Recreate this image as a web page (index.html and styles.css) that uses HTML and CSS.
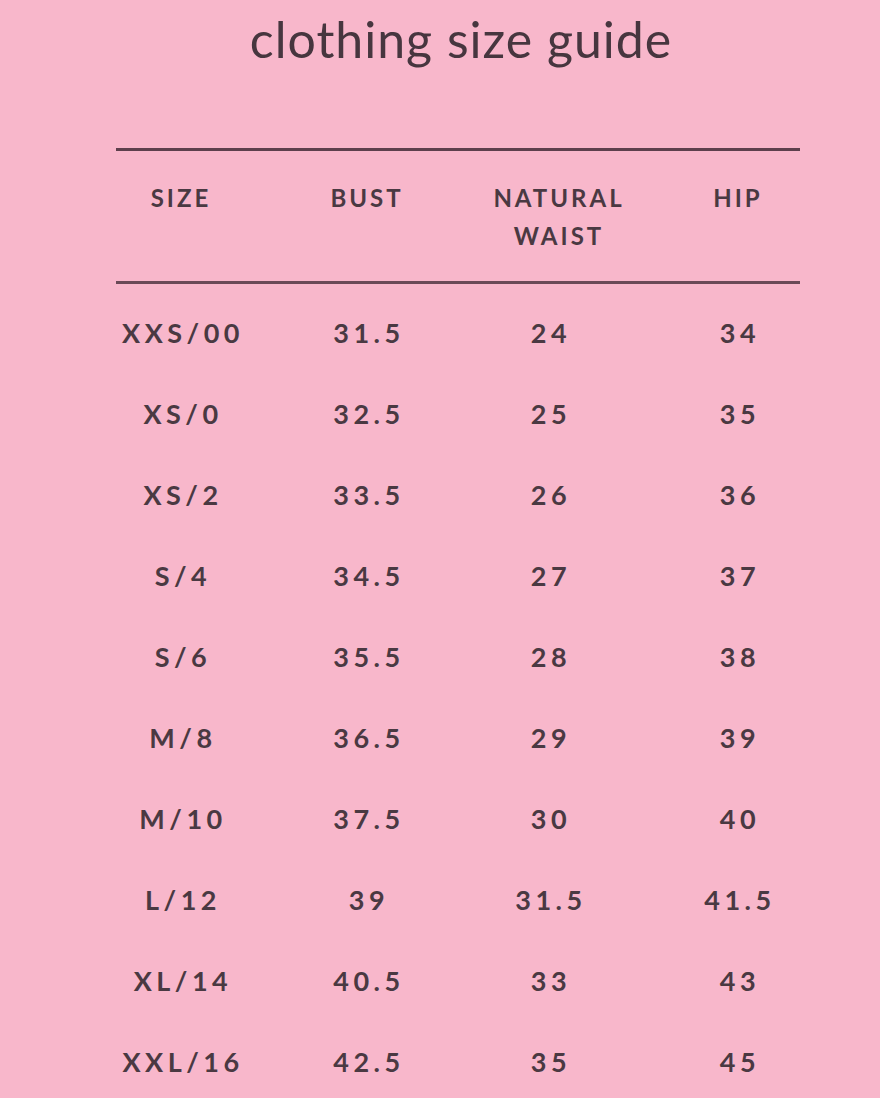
FILE: index.html
```html
<!DOCTYPE html>
<html lang="en">
<head>
<meta charset="utf-8">
<title>clothing size guide</title>
<link rel="stylesheet" href="styles.css">
</head>
<body>
<h1 class="title">clothing size guide</h1>
<div class="table">
  <div class="head">
    <div class="cell">SIZE</div>
    <div class="cell">BUST</div>
    <div class="cell waist-head">NATURAL<br>WAIST</div>
    <div class="cell">HIP</div>
  </div>
  <div class="body">
    <div class="row"><div class="cell">XXS/00</div><div class="cell">31.5</div><div class="cell">24</div><div class="cell">34</div></div>
    <div class="row"><div class="cell">XS/0</div><div class="cell">32.5</div><div class="cell">25</div><div class="cell">35</div></div>
    <div class="row"><div class="cell">XS/2</div><div class="cell">33.5</div><div class="cell">26</div><div class="cell">36</div></div>
    <div class="row"><div class="cell">S/4</div><div class="cell">34.5</div><div class="cell">27</div><div class="cell">37</div></div>
    <div class="row"><div class="cell">S/6</div><div class="cell">35.5</div><div class="cell">28</div><div class="cell">38</div></div>
    <div class="row"><div class="cell">M/8</div><div class="cell">36.5</div><div class="cell">29</div><div class="cell">39</div></div>
    <div class="row"><div class="cell">M/10</div><div class="cell">37.5</div><div class="cell">30</div><div class="cell">40</div></div>
    <div class="row"><div class="cell">L/12</div><div class="cell">39</div><div class="cell">31.5</div><div class="cell">41.5</div></div>
    <div class="row"><div class="cell">XL/14</div><div class="cell">40.5</div><div class="cell">33</div><div class="cell">43</div></div>
    <div class="row"><div class="cell">XXL/16</div><div class="cell">42.5</div><div class="cell">35</div><div class="cell">45</div></div>
  </div>
</div>
</body>
</html>
```

FILE: styles.css
```css
html, body {
  margin: 0;
  padding: 0;
  background: #f8b7cb;
}
body {
  width: 880px;
  height: 1098px;
  overflow: hidden;
  color: #4a3942;
  font-family: "Lato", "DejaVu Sans", sans-serif;
}
.title {
  margin: 0;
  padding: 10px 0 0 42px;
  text-align: center;
  font-size: 50px;
  font-weight: 400;
  line-height: 58px;
  letter-spacing: 1px;
  color: #47363f;
}
.table {
  margin: 80px 0 0 116px;
  width: 684px;
}
.head {
  display: grid;
  grid-template-columns: 130px 242px 122px 256px;
  border-top: 3px solid #5d3f4c;
  border-bottom: 3px solid #6a4a57;
  padding: 28px 0 26px;
  font-size: 24px;
  font-weight: 700;
  letter-spacing: 3px;
  line-height: 38px;
}
.head .cell {
  justify-self: center;
  text-align: center;
  white-space: nowrap;
}
.head .waist-head {
  padding-left: 20px;
}
.body {
  padding-top: 8px;
}
.row {
  display: grid;
  grid-template-columns: 130px 242px 122px 256px;
  height: 81px;
  line-height: 81px;
  font-size: 27px;
  font-weight: 700;
  letter-spacing: 4.5px;
}
.row .cell {
  justify-self: center;
  white-space: nowrap;
  padding-left: 4px;
}
```
